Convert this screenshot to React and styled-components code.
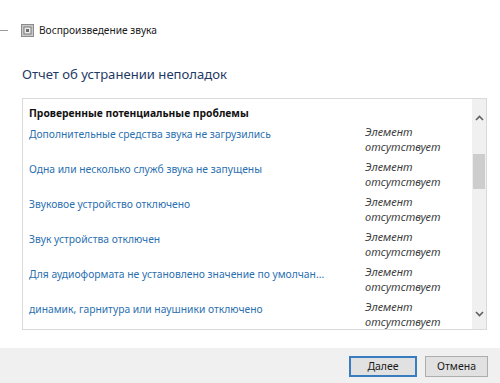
import React from "react";
import styled, { createGlobalStyle } from "styled-components";

const Global = createGlobalStyle`
  html, body { margin: 0; padding: 0; background: #ffffff; }
  body { font-family: "Noto Sans", "Open Sans", sans-serif; }
`;

const Window = styled.div`
  width: 500px;
  height: 383px;
  display: flex;
  flex-direction: column;
  background: #ffffff;
  overflow: hidden;
`;

const TitleBar = styled.div`
  height: 60px;
  display: flex;
  align-items: center;
`;

const BackArrow = styled.div`
  width: 8px;
  height: 1px;
  background: #9a9a9a;
  margin-right: 13px;
`;

const AppIcon = styled.svg`
  width: 13px;
  height: 13px;
  margin-right: 5px;
  flex: none;
`;

const WindowTitle = styled.span`
  font-size: 10.2px;
  color: #1a1a1a;
`;

const Heading = styled.h1`
  margin: 4px 0 14px 22px;
  font-size: 13.1px;
  font-weight: 400;
  line-height: 20px;
  color: #1f3a66;
`;

const Panel = styled.div`
  margin: 0 13px 0 22px;
  height: 232px;
  box-sizing: border-box;
  border: 1px solid #d9d9d9;
  display: grid;
  grid-template-columns: 1fr 14px;
  overflow: hidden;
`;

const List = styled.div`
  padding: 7px 0 0 6px;
`;

const ListHeader = styled.div`
  font-size: 10.3px;
  font-weight: 700;
  line-height: 15px;
  color: #111;
  margin-bottom: 4px;
`;

const Row = styled.div`
  display: grid;
  grid-template-columns: 336px 1fr;
  height: 35px;
`;

const Problem = styled.span`
  font-size: 10.3px;
  line-height: 15px;
  padding-top: 2px;
  color: #2a70b0;
  white-space: nowrap;
`;

const Status = styled.span`
  font-size: 11px;
  line-height: 14.5px;
  font-style: italic;
  color: #404040;
`;

const Scrollbar = styled.div`
  background: #f0f0f0;
  display: flex;
  flex-direction: column;
  align-items: center;
  padding-top: 16px;
`;

const Chevron = styled.svg`
  width: 9px;
  height: 6px;
  flex: none;
`;

const Thumb = styled.div`
  width: 12px;
  height: 35px;
  background: #cdcdcd;
  margin-top: 33px;
  margin-bottom: auto;
`;

const DownWrap = styled.div`
  margin-bottom: 18px;
  display: flex;
`;

const Footer = styled.div`
  margin-top: auto;
  height: 35px;
  background: #f0f0f0;
  display: flex;
  justify-content: flex-end;
  align-items: flex-start;
  gap: 8px;
  padding: 8px 12px 0 0;
  box-sizing: border-box;
`;

const Button = styled.button`
  width: ${(p) => p.$w}px;
  height: 21px;
  box-sizing: border-box;
  border: ${(p) => (p.$primary ? "2px solid #3a7cc0" : "1px solid #adadad")};
  background: #e1e1e1;
  font-family: "Noto Sans", "Open Sans", sans-serif;
  font-size: 10.5px;
  color: #1a1a1a;
  padding: 0;
  line-height: 17px;
`;

const problems = [
  "Дополнительные средства звука не загрузились",
  "Одна или несколько служб звука не запущены",
  "Звуковое устройство отключено",
  "Звук устройства отключен",
  "Для аудиоформата не установлено значение по умолчан...",
  "динамик, гарнитура или наушники отключено",
];

export default function App() {
  return (
    <>
      <Global />
      <Window>
        <TitleBar>
          <BackArrow />
          <AppIcon viewBox="0 0 13 13">
            <rect x="0.5" y="0.5" width="12" height="12" fill="#c9c9c9" stroke="#8c8c8c" />
            <rect x="3" y="3" width="7" height="7" fill="#ececec" stroke="#7a7a7a" />
            <rect x="5" y="5" width="3" height="3" fill="#6e6e6e" />
          </AppIcon>
          <WindowTitle>Воспроизведение звука</WindowTitle>
        </TitleBar>
        <Heading>Отчет об устранении неполадок</Heading>
        <Panel>
          <List>
            <ListHeader>Проверенные потенциальные проблемы</ListHeader>
            {problems.map((p) => (
              <Row key={p}>
                <Problem>{p}</Problem>
                <Status>
                  Элемент
                  <br />
                  отсутствует
                </Status>
              </Row>
            ))}
          </List>
          <Scrollbar>
            <Chevron viewBox="0 0 9 6">
              <path d="M1 5 L4.5 1.5 L8 5" fill="none" stroke="#606060" strokeWidth="1.6" />
            </Chevron>
            <Thumb />
            <DownWrap>
              <Chevron viewBox="0 0 9 6">
                <path d="M1 1 L4.5 4.5 L8 1" fill="none" stroke="#606060" strokeWidth="1.6" />
              </Chevron>
            </DownWrap>
          </Scrollbar>
        </Panel>
        <Footer>
          <Button $primary $w={68}>
            <u>Д</u>алее
          </Button>
          <Button $w={63}>Отмена</Button>
        </Footer>
      </Window>
    </>
  );
}
